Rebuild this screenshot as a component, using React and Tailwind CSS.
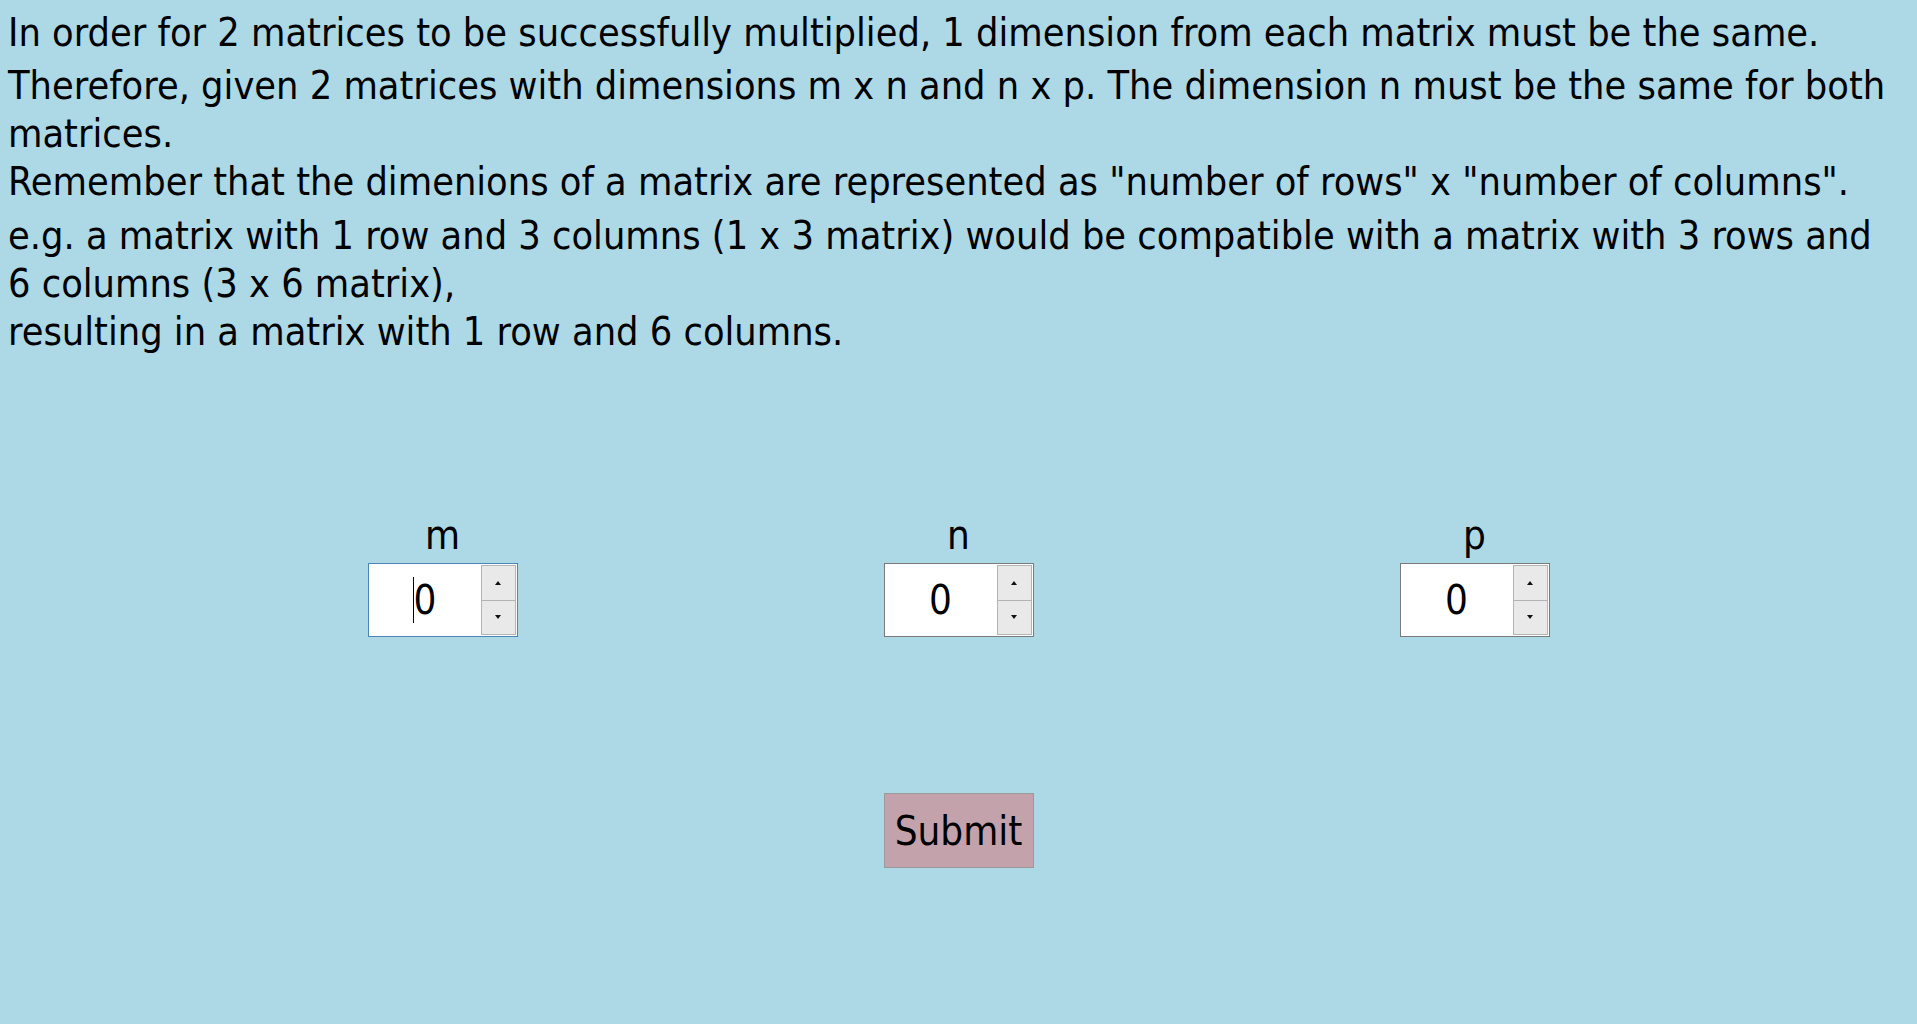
import React from 'react'

const font = { fontFamily: '"DejaVu Sans Condensed", "DejaVu Sans", sans-serif' }

function Spinner() {
  return (
    <div className="flex flex-col w-[35px] my-px mr-px">
      <div className="flex-1 flex items-center justify-center border border-[#b3b3b3] bg-[#e9e9e9]">
        <svg width="6" height="4" viewBox="0 0 6 4"><path d="M3 0 L6 4 L0 4 Z" fill="#111" /></svg>
      </div>
      <div className="flex-1 flex items-center justify-center border border-t-0 border-[#b3b3b3] bg-[#e9e9e9]">
        <svg width="6" height="4" viewBox="0 0 6 4"><path d="M0 0 L6 0 L3 4 Z" fill="#111" /></svg>
      </div>
    </div>
  )
}

function DimInput({ label, focused }) {
  return (
    <div className="flex flex-col items-center w-[516px]">
      <div className="text-[40px] leading-[47px] text-black">{label}</div>
      <div
        className={
          'mt-[4px] w-[150px] h-[74px] bg-white border flex ' +
          (focused ? 'border-[#4a86b8]' : 'border-[#7a7a7a]')
        }
      >
        <div className="flex-1 flex items-center justify-center text-[40px] text-black">
          {focused && <span className="inline-block w-px h-[46px] bg-black" />}
          <span>0</span>
        </div>
        <Spinner />
      </div>
    </div>
  )
}

export default function App() {
  return (
    <div className="min-h-[1024px] bg-[#add8e6] text-black" style={font}>
      {/* Explanation */}
      <div className="pt-[9px] pl-[8px] text-[39.3px] leading-[48px] whitespace-nowrap">
        <p>In order for 2 matrices to be successfully multiplied, 1 dimension from each matrix must be the same.</p>
        <p className="mt-[5px]">
          Therefore, given 2 matrices with dimensions m x n and n x p. The dimension n must be the same for both
          <br />
          matrices.
          <br />
          Remember that the dimenions of a matrix are represented as "number of rows" x "number of columns".
        </p>
        <p className="mt-[6px]">
          e.g. a matrix with 1 row and 3 columns (1 x 3 matrix) would be compatible with a matrix with 3 rows and
          <br />
          6 columns (3 x 6 matrix),
          <br />
          resulting in a matrix with 1 row and 6 columns.
        </p>
      </div>

      {/* Inputs */}
      <div className="mt-[156px] flex justify-center">
        <DimInput label="m" focused />
        <DimInput label="n" />
        <DimInput label="p" />
      </div>

      <div className="mt-[156px] flex justify-center">
        <button className="w-[150px] h-[75px] bg-[#c4a2ab] border border-[#9a9a9a] text-[40px] text-black">
          Submit
        </button>
      </div>
    </div>
  )
}
